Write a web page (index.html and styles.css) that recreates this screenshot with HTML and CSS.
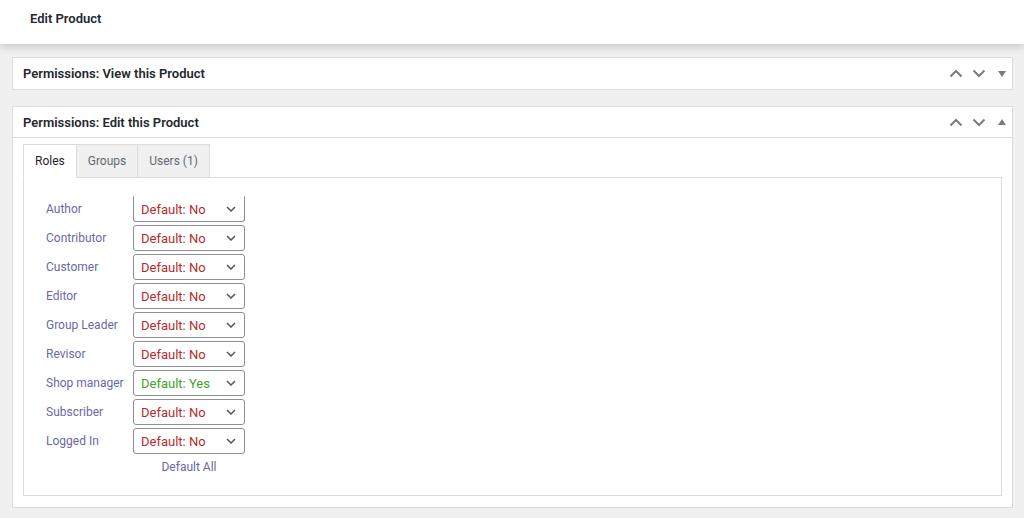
FILE: index.html
```html
<!DOCTYPE html>
<html>
<head>
<meta charset="utf-8">
<link rel="stylesheet" href="styles.css">
</head>
<body>
<header class="topbar"><h1 class="page-title">Edit Product</h1></header>
<main class="content">
  <section class="postbox closed">
    <div class="postbox-header">
      <h2 class="hndle">Permissions: View this Product</h2>
      <div class="handle-actions">
        <svg class="chev" viewBox="0 0 14 9" width="14" height="9"><path d="M1.5 7.5 7 2l5.5 5.5"/></svg>
        <svg class="chev" viewBox="0 0 14 9" width="14" height="9"><path d="M1.5 1.5 7 7l5.5-5.5"/></svg>
        <svg class="tri" viewBox="0 0 8 6" width="8" height="6"><path d="M0 0h8L4 6z"/></svg>
      </div>
    </div>
  </section>
  <section class="postbox open">
    <div class="postbox-header">
      <h2 class="hndle">Permissions: Edit this Product</h2>
      <div class="handle-actions">
        <svg class="chev" viewBox="0 0 14 9" width="14" height="9"><path d="M1.5 7.5 7 2l5.5 5.5"/></svg>
        <svg class="chev" viewBox="0 0 14 9" width="14" height="9"><path d="M1.5 1.5 7 7l5.5-5.5"/></svg>
        <svg class="tri" viewBox="0 0 8 6" width="8" height="6"><path d="M0 6h8L4 0z"/></svg>
      </div>
    </div>
    <div class="inside">
      <ul class="tabs">
        <li class="tab active">Roles</li>
        <li class="tab">Groups</li>
        <li class="tab">Users (1)</li>
      </ul>
      <div class="tab-panel">
        <div class="roles">
          <div class="role-row first"><span class="role-label">Author</span><div class="sel no">Default: No<svg viewBox="0 0 10 6" width="10" height="6"><path d="M1 1l4 4 4-4"/></svg></div></div>
          <div class="role-row"><span class="role-label">Contributor</span><div class="sel no">Default: No<svg viewBox="0 0 10 6" width="10" height="6"><path d="M1 1l4 4 4-4"/></svg></div></div>
          <div class="role-row"><span class="role-label">Customer</span><div class="sel no">Default: No<svg viewBox="0 0 10 6" width="10" height="6"><path d="M1 1l4 4 4-4"/></svg></div></div>
          <div class="role-row"><span class="role-label">Editor</span><div class="sel no">Default: No<svg viewBox="0 0 10 6" width="10" height="6"><path d="M1 1l4 4 4-4"/></svg></div></div>
          <div class="role-row"><span class="role-label">Group Leader</span><div class="sel no">Default: No<svg viewBox="0 0 10 6" width="10" height="6"><path d="M1 1l4 4 4-4"/></svg></div></div>
          <div class="role-row"><span class="role-label">Revisor</span><div class="sel no">Default: No<svg viewBox="0 0 10 6" width="10" height="6"><path d="M1 1l4 4 4-4"/></svg></div></div>
          <div class="role-row"><span class="role-label">Shop manager</span><div class="sel yes">Default: Yes<svg viewBox="0 0 10 6" width="10" height="6"><path d="M1 1l4 4 4-4"/></svg></div></div>
          <div class="role-row"><span class="role-label">Subscriber</span><div class="sel no">Default: No<svg viewBox="0 0 10 6" width="10" height="6"><path d="M1 1l4 4 4-4"/></svg></div></div>
          <div class="role-row"><span class="role-label">Logged In</span><div class="sel no">Default: No<svg viewBox="0 0 10 6" width="10" height="6"><path d="M1 1l4 4 4-4"/></svg></div></div>
          <div class="role-row"><span class="role-label"></span><a class="default-all">Default All</a></div>
        </div>
      </div>
    </div>
  </section>
</main>
</body>
</html>
```

FILE: styles.css
```css
* { box-sizing: border-box; }
html, body { margin: 0; padding: 0; }
body {
  background: #f0f0f1;
  font-family: Roboto, "Noto Sans", "Liberation Sans", sans-serif;
  color: #1d2327;
  height: 518px;
  overflow: hidden;
}
.topbar {
  background: #fff;
  height: 44px;
  padding: 0 0 0 30px;
  box-shadow: 0 3px 8px rgba(0, 0, 0, 0.17);
  position: relative;
}
.page-title {
  margin: 0;
  font-size: 13px;
  font-weight: 600;
  line-height: 37px;
  color: #23282d;
}
.content {
  padding: 13px 11px 0 12px;
}
.postbox {
  background: #fff;
  border: 1px solid #dcdcde;
  margin-bottom: 16px;
}
.postbox-header {
  display: flex;
  align-items: center;
  justify-content: space-between;
  height: 31px;
  padding: 0 6px 0 10px;
}
.open .postbox-header {
  height: 31px;
  border-bottom: 1px solid #dcdcde;
}
.hndle {
  margin: 0;
  font-size: 13px;
  font-weight: 600;
  color: #23282d;
}
.handle-actions {
  display: flex;
  align-items: center;
  gap: 9px;
}
.chev path {
  fill: none;
  stroke: #787c82;
  stroke-width: 2;
}
.tri { margin-left: 3px; }
.tri path { fill: #787c82; }
.inside {
  padding: 6px 10px 11px 10px;
}
.tabs {
  display: flex;
  list-style: none;
  margin: 0;
  padding: 0;
  position: relative;
  z-index: 1;
  margin-bottom: -1px;
}
.tab {
  height: 34px;
  line-height: 32px;
  padding: 0 11px;
  font-size: 12px;
  color: #646970;
  background: #f0f0f1;
  border: 1px solid #dcdcde;
  border-left: none;
}
.tab:first-child { border-left: 1px solid #dcdcde; }
.tab.active {
  background: #fff;
  color: #1d2327;
  border-bottom-color: #fff;
}
.tab-panel {
  border: 1px solid #dcdcde;
  height: 319px;
  padding: 18px 22px 0 22px;
}
.roles {
  display: flex;
  flex-direction: column;
  gap: 3px;
}
.role-row {
  display: flex;
  align-items: center;
  height: 26px;
}
.role-label {
  width: 87px;
  font-size: 12px;
  color: #6c67a8;
}
.sel {
  width: 112px;
  height: 26px;
  border: 1px solid #8c8f94;
  border-radius: 3px;
  display: flex;
  align-items: center;
  justify-content: space-between;
  padding: 0 8px 0 7px;
  font-size: 13px;
  background: #fff;
}
.first .sel { border-top-color: transparent; border-radius: 0 0 3px 3px; }
.sel svg path {
  fill: none;
  stroke: #50575e;
  stroke-width: 1.5;
}
.sel.no { color: #b32d2e; }
.sel.yes { color: #3fa22d; }
.default-all {
  width: 112px;
  text-align: center;
  font-size: 12px;
  color: #6c67a8;
  line-height: 20px;
  margin-top: -7px;
}
```
